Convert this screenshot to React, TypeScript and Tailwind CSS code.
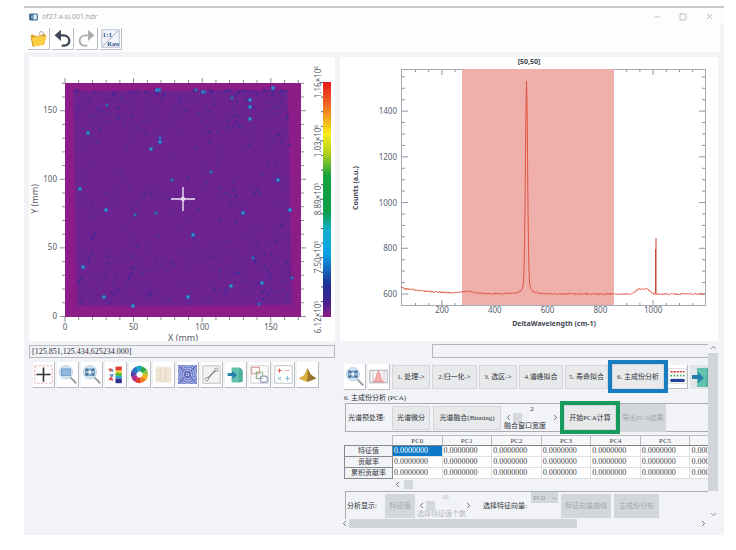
import type { ReactNode } from "react";
import { ChevronDown, ChevronLeft, ChevronRight, ChevronUp, Minus, Square, X } from "lucide-react";

// -----------------------------------------------------------------------------
// Data
// -----------------------------------------------------------------------------
const components = ["PC0", "PC1", "PC2", "PC3", "PC4", "PC5", "PC6"];
const pcaRows = ["特征值", "贡献率", "累积贡献率"];

const brightSpots = [
  [130, 33, 2], [128, 33, 2], [174, 35, 2], [176, 35, 1], [167, 33, 1], [244, 31, 2], [203, 41, 1],
  [221, 43, 2], [221, 50, 2], [221, 62, 2], [78, 48, 1], [59, 76, 2], [131, 81, 1], [131, 85, 2],
  [122, 92, 2], [182, 115, 1], [143, 123, 1], [249, 123, 2], [51, 132, 2], [77, 153, 2],
  [106, 158, 1], [127, 156, 1], [214, 156, 2], [261, 153, 2], [164, 178, 2], [54, 210, 2],
  [75, 240, 2], [104, 249, 2], [159, 240, 2], [202, 229, 2], [233, 226, 2], [263, 221, 1],
  [224, 201, 1], [230, 247, 1]
];

// Small deterministic generator so that the map looks the same on every render
function createRandom(seed: number) {
  let state = seed;
  return () => {
    state = (state * 1664525 + 1013904223) % 4294967296;
    return state / 4294967296;
  };
}

const random = createRandom(27);

const darkSpots = Array.from({ length: 400 }, (_, i) => {
  let x = 46 + random() * 215;
  let y = 34 + random() * 213;
  if (i % 5 === 0) y = 34 + random() * 40;
  if (i % 5 === 1) x = 180 + random() * 81;
  if (i % 5 === 2) y = 195 + random() * 52;
  if (i % 12 === 3) y = 33 + random() * 3;
  return { x, y, opacity: 0.3 + random() * 0.7 };
});

const spectrumPoints = Array.from({ length: 609 }, (_, i) => {
  const x = 61 + i / 2;
  const narrow = Math.exp(-(((x - 186.5) / 1.5) ** 2));
  let y = 237 - 6 * Math.exp(-(x - 61) / 32) + (random() - 0.5) * 1.5;
  y -= 2 * Math.exp(-(((x - 128) / 8) ** 2));
  y -= 183 * narrow + 30 / (1 + ((x - 186.5) / 2) ** 2);
  if (x > 293 && x < 314) y -= Math.min(5, x - 293, (314 - x) * 0.7);
  return `${x},${y.toFixed(1)}`;
}).join(" ");

const colorLabels = [
  { mantissa: "6.12", power: "5", y: 260 },
  { mantissa: "7.50", power: "5", y: 200 },
  { mantissa: "8.89", power: "5", y: 142 },
  { mantissa: "1.03", power: "6", y: 84 },
  { mantissa: "1.16", power: "6", y: 25 }
];

const range = (count: number) => Array.from({ length: count }, (_, i) => i);

// -----------------------------------------------------------------------------
// Charts
// -----------------------------------------------------------------------------
function HeatMap() {
  return (
    <svg viewBox="0 0 306 284" className="block w-full bg-white font-['Noto_Sans',sans-serif] text-[8px]" role="img" aria-label="Raman map">
      <defs>
        <linearGradient id="scale" x1="0" y1="0" x2="0" y2="1">
          <stop offset="0" stopColor="#e8141c" />
          <stop offset="0.1" stopColor="#ee6b1f" />
          <stop offset="0.22" stopColor="#f8ec16" />
          <stop offset="0.3" stopColor="#b5d21c" />
          <stop offset="0.4" stopColor="#12a03c" />
          <stop offset="0.55" stopColor="#0a9c48" />
          <stop offset="0.63" stopColor="#0fb0c8" />
          <stop offset="0.73" stopColor="#08a0e6" />
          <stop offset="0.86" stopColor="#1b2f96" />
          <stop offset="0.93" stopColor="#3c1f8c" />
          <stop offset="1" stopColor="#8b1a87" />
        </linearGradient>
        <pattern id="grain" width="6" height="6" patternUnits="userSpaceOnUse">
          <path d="M0 1h2M3 4h2M5 0v2" stroke="#57208f" strokeWidth="1" opacity="0.2" />
        </pattern>
      </defs>

      <g stroke="#8a8d98" strokeWidth="1">
        {range(18).map((i) => {
          const length = i % 5 === 0 ? 5 : 3;
          const x = 36 + i * 13.72;
          const y = 259.5 - i * 13.72;
          return (
            <g key={i}>
              <path d={`M${x} 260v${length}M${x} 26v-${length}`} />
              <path d={`M36 ${y}h-${length}M272 ${y}h${length}`} />
            </g>
          );
        })}
      </g>

      <rect x="36" y="26" width="236" height="234" fill="#8b1a87" />
      <path d="M44 34L259 33L263 248L48 249Z" fill="#6c218e" />
      <path d="M44 34L259 33L263 248L48 249Z" fill="url(#grain)" />
      {darkSpots.map((spot, i) => (
        <circle key={i} cx={spot.x} cy={spot.y} r="1.2" fill="#3a2799" opacity={spot.opacity} />
      ))}
      {brightSpots.map(([x, y, size], i) => (
        <g key={i}>
          <circle cx={x} cy={y} r={size === 2 ? 2.3 : 1.8} fill="#2b56b0" />
          <circle cx={x} cy={y} r={size === 2 ? 1.4 : 0.7} fill="#3a92cc" />
        </g>
      ))}
      <path d="M142 142h24M154 130v24" stroke="#f1e4f5" strokeWidth="1.4" />
      <circle cx="154" cy="142" r="1.8" fill="none" stroke="#f1e4f5" />

      <g fill="#555a64">
        {[0, 50, 100, 150].map((value) => (
          <g key={value}>
            <text x={36 + value * 1.372} y="273" textAnchor="middle">{value}</text>
            <text x="28" y={262 - value * 1.372} textAnchor="end">{value}</text>
          </g>
        ))}
        <text x="154" y="284" textAnchor="middle" className="text-[9px]">X (mm)</text>
        <text transform="translate(9 142) rotate(-90)" textAnchor="middle" className="text-[9px]">Y (mm)</text>
      </g>

      <rect x="294" y="25" width="8" height="235" fill="url(#scale)" />
      <g stroke="#555a64">
        {range(17).map((i) => <path key={i} d={`M294 ${25.5 + i * 14.6}h${i % 4 === 0 ? -3 : -2}`} />)}
      </g>
      {colorLabels.map((label) => (
        <text key={label.mantissa} transform={`translate(292 ${label.y}) rotate(-90)`} textAnchor="middle" fill="#555a64">
          {label.mantissa}×10<tspan dy="-3" className="text-[5px]">{label.power}</tspan>
        </text>
      ))}
    </svg>
  );
}

function SpectrumChart() {
  return (
    <svg viewBox="0 0 378 284" className="block w-full overflow-visible bg-white font-['Noto_Sans',sans-serif] text-[8px]" role="img" aria-label="Spectrum">
      <rect x="122" y="12" width="152" height="236" fill="#efb0ac" />
      <rect x="61.5" y="12.5" width="304" height="236" fill="none" stroke="#a3a8b4" />
      <g stroke="#8f94a0">
        {range(22).map((i) => {
          const x = 75.5 + i * 13.2;
          const length = i % 4 === 2 ? 5 : 2;
          return <path key={i} d={`M${x} 248v-${length}M${x} 13v${length}`} />;
        })}
        {range(20).map((i) => {
          const y = 237 - i * 11.43;
          const length = i % 4 === 0 ? 6 : 3;
          return <path key={i} d={`M62 ${y}h${length}M365 ${y}h-${length}`} />;
        })}
      </g>
      <rect x="122" y="12" width="152" height="236" fill="#efb0ac" />
      <polyline points={spectrumPoints} fill="none" stroke="#e0513f" strokeWidth="1" />
      <path d="M315.5 236V192M316 236V181" fill="none" stroke="#c84232" />
      <g fill="#555d6e">
        {[600, 800, 1000, 1200, 1400].map((value) => (
          <text key={value} x="57" y={240 - (value - 600) * 0.2285} textAnchor="end">{value}</text>
        ))}
        {[200, 400, 600, 800, 1000].map((value) => (
          <text key={value} x={102 + (value - 200) * 0.264} y="256" textAnchor="middle">{value}</text>
        ))}
      </g>
      <g fill="#3c4250" fontWeight="700" className="font-['Noto_Sans',sans-serif] text-[7px]">
        <text x="189" y="7" textAnchor="middle">[50,50]</text>
        <text x="214" y="269" textAnchor="middle">DeltaWavelength (cm-1)</text>
        <text transform="translate(18 131) rotate(-90)" textAnchor="middle">Counts (a.u.)</text>
      </g>
    </svg>
  );
}

// -----------------------------------------------------------------------------
// Icons
// -----------------------------------------------------------------------------
function Icon({ children }: { children: ReactNode }) {
  return <svg viewBox="0 0 24 24" className="block size-full" fill="none" aria-hidden="true">{children}</svg>;
}

const FolderIcon = () => (
  <Icon>
    <path d="M2 8l3-1 4 2 11-3 2 3-3 11-14 2z" fill="#e0a22c" />
    <path d="M3 11l16-3 3 2-4 10-13 2z" fill="#fbcf3f" />
    <path d="M13 7c0-5 5-5 5-1v4" stroke="#8b8b84" />
    <path d="M3 11l2 11" stroke="#c98a25" />
  </Icon>
);

const UndoIcon = ({ color }: { color: string }) => (
  <Icon>
    <path d="M7 8h6c10 0 10 13 1 13h-3" stroke={color} strokeWidth="2.8" />
    <path d="M2 8l8-7v14z" fill={color} />
  </Icon>
);

const RedoIcon = ({ color }: { color: string }) => (
  <Icon>
    <path d="M17 8h-6c-10 0-10 13-1 13h3" stroke={color} strokeWidth="2.4" />
    <path d="M22 8l-8-7v14z" fill={color} />
  </Icon>
);

const RawIcon = () => (
  <Icon>
    <rect x="1" y="1" width="22" height="22" fill="#f1f4f9" stroke="#a9b4c8" />
    <path d="M2 22L22 2" stroke="#8e9bb4" />
    <text x="2" y="10" fontSize="9" fontWeight="700" fill="#31528e">1:1</text>
    <text x="8" y="22" fontSize="8" fontWeight="700" fill="#31528e">Raw</text>
  </Icon>
);

const CrosshairIcon = () => (
  <Icon>
    <rect x="1" y="1" width="22" height="22" stroke="#e89a97" strokeDasharray="3 2" />
    <path d="M12 3v18M3 12h18" stroke="#2c2f33" strokeWidth="2" />
  </Icon>
);

const MagnifierIcon = ({ fit }: { fit?: boolean }) => (
  <Icon>
    <path d="M15 15l8 8" stroke="#9a9fa4" strokeWidth="2.4" />
    <circle cx="10" cy="9" r="8.5" fill="#cfe4f3" stroke="#b9d0e0" />
    <rect x="4.500" y="5" width="11" height="8" fill="#8fbbdf" stroke="#5c89b3" />
    {fit && <path d="M5 5l4 3M15 5l-4 3M5 13l4-3M15 13l-4-3" stroke="#2e4c6c" strokeWidth="1.4" />}
    {fit && <rect x="8" y="7" width="4" height="4" fill="#e6f1fa" />}
  </Icon>
);

const PaletteIcon = () => (
  <Icon>
    <path d="M3 4l6 1-4 4zM3 19l7 1-4-6z" fill="#d8574d" />
    <path d="M4 12l6-1-2 5zM7 4l3 4-3 1z" fill="#5f92c8" />
    <path d="M12 2h8v5h-8z" fill="#e4372a" />
    <path d="M12 7h8v3h-8z" fill="#f6c91d" />
    <path d="M12 10h8v4h-8z" fill="#58b947" />
    <path d="M12 14h8v3h-8z" fill="#20a4ca" />
    <path d="M12 17h8v6h-8z" fill="#2b2f88" />
  </Icon>
);

const wheelColors = ["#f4b51e", "#f07d22", "#e5352b", "#b02a86", "#5640a0", "#2472c8", "#1ba3c9", "#27a64a", "#8cc63e"];

const WheelIcon = () => (
  <Icon>
    {wheelColors.map((color, i) => (
      <circle key={color} cx="12" cy="12" r="7.4" stroke={color} strokeWidth="7" pathLength="9" strokeDasharray="1.05 7.95" strokeDashoffset={-i} />
    ))}
  </Icon>
);

const TextureIcon = () => (
  <Icon>
    <rect x="2" y="2" width="20" height="20" fill="#f3e9da" />
    <path d="M2 8q3-5 6 0t6 0t7 0M2 14q3-5 6 0t6 0t7 0M2 19q3-4 6 0t6 0t7 0M8 3v18M15 3v18" stroke="#e3d4be" />
  </Icon>
);

const WaveIcon = () => (
  <Icon>
    <rect x="0" y="0" width="24" height="24" fill="#7584cf" />
    {[2, 5, 8, 11, 14].map((r) => <circle key={r} cx="12" cy="12" r={r} stroke="#eef0fb" strokeDasharray="2 1" />)}
    <circle cx="12" cy="12" r="3.5" stroke="#27398f" />
    <path d="M2 2l6 6M22 2l-6 6M2 22l6-6M22 22l-6-6" stroke="#2c3e9b" strokeDasharray="2 1" />
  </Icon>
);

const LineIcon = () => (
  <Icon>
    <rect x="1" y="1" width="22" height="22" fill="#f2f2f2" stroke="#b5b5b8" />
    <path d="M6 18L18 6" stroke="#777b80" strokeWidth="1.5" />
    <circle cx="6" cy="18" r="2" fill="#fff" stroke="#777b80" />
    <circle cx="18" cy="6" r="2" fill="#fff" stroke="#777b80" />
  </Icon>
);

const ExportIcon = () => (
  <Icon>
    <path d="M7 3h10l4 4v14l-5 1H7z" fill="#62c3ae" />
    <path d="M17 3l4 4h-4z" fill="#3c9c88" />
    <path d="M16 8h5v13l-5 1z" fill="#4fb09c" />
    <path d="M2 10h6V7l6 6-6 5v-4H2z" fill="#247fae" />
  </Icon>
);

const LayersIcon = () => (
  <Icon>
    <rect x="1" y="1" width="22" height="22" fill="#fafafa" stroke="#c7c7c7" />
    <rect x="2" y="3" width="10" height="8" stroke="#dda09c" strokeWidth="1.4" />
    <path d="M8 8v9h8" stroke="#85ad78" strokeWidth="1.4" />
    <path d="M8 9h8v5" stroke="#85ad78" strokeWidth="1.2" />
    <rect x="13" y="14" width="9" height="8" rx="3" stroke="#8f9ebb" strokeWidth="1.4" />
  </Icon>
);

const MarksIcon = () => (
  <Icon>
    <rect x="1" y="1" width="22" height="22" fill="#fff" stroke="#b5b5b8" />
    <path d="M4 7h6M7 4v6" stroke="#df655c" strokeWidth="1.3" />
    <path d="M14 7h6" stroke="#df655c" strokeDasharray="2 1" />
    <path d="M5 15l4 4M9 15l-4 4M17 14v6M14 17h6" stroke="#75b7d8" strokeWidth="1.2" />
  </Icon>
);

const SurfaceIcon = () => (
  <Icon>
    <path d="M1 17l7-4 4-9 4 8 7 5-11 4z" fill="#c4932a" />
    <path d="M12 4l-1 17-10-4 7-4z" fill="#dcb03c" />
    <path d="M12 4l4 8 7 5-11 4 1-8z" fill="#96732a" />
  </Icon>
);

const PeakIcon = () => (
  <Icon>
    <rect x="1" y="4" width="22" height="16" fill="#f3f5f7" stroke="#8fa0ac" />
    <path d="M5 19c4 0 5-14 7-14s3 14 7 14z" fill="#f3b1ab" stroke="#e0867f" />
    <path d="M5 4v16M19 4v16" stroke="#e3b3b3" />
  </Icon>
);

const LegendIcon = () => (
  <Icon>
    <rect x="1" y="2" width="22" height="19" fill="#fff" stroke="#d7d7d7" />
    <path d="M3 6h18" stroke="#d64439" strokeWidth="1.6" strokeDasharray="3 1" />
    <path d="M3 11h18" stroke="#3fa95c" strokeWidth="2.2" strokeDasharray="2 2" />
    <path d="M3 17h18" stroke="#24409b" strokeWidth="4" />
  </Icon>
);

// -----------------------------------------------------------------------------
// Controls
// -----------------------------------------------------------------------------
function IconButton({ label, children }: { label: string; children: ReactNode }) {
  return (
    <button type="button" aria-label={label} className="size-[22px] shrink-0 border-r border-b border-[#b9bcc0] bg-white p-px">
      {children}
    </button>
  );
}

function SmallIconButton({ label, children }: { label: string; children: ReactNode }) {
  return (
    <button type="button" aria-label={label} className="h-[26px] w-[22px] shrink-0 border-r border-b border-[#b9bcc0] bg-white px-px py-[2px]">
      {children}
    </button>
  );
}

function TextButton({ className = "", disabled, children }: { className?: string; disabled?: boolean; children: ReactNode }) {
  return (
    <button
      type="button"
      disabled={disabled}
      className={`h-6 shrink-0 border border-[#d3d6d9] bg-[#e7e9eb] text-center whitespace-nowrap text-[#2e3136] disabled:border-transparent disabled:bg-[#d4d7da] disabled:text-[#a2a6aa] ${className}`}
    >
      {children}
    </button>
  );
}

function Stepper({ value, caption, disabled }: { value: string; caption: string; disabled?: boolean }) {
  return (
    <div className={`flex w-14 shrink-0 flex-col leading-[8px] ${disabled ? "text-[#b4b8bc]" : "text-[#2e3136]"}`}>
      <output className="text-center">{value}</output>
      <div className="flex items-center text-[#3d4045]">
        <button type="button" aria-label={`${caption} -`}><ChevronLeft className="size-[9px]" /></button>
        <span className="h-[9px] w-[9px] bg-[#d6d9dc]" />
        <button type="button" aria-label={`${caption} +`} className="ml-auto"><ChevronRight className="size-[9px]" /></button>
      </div>
      <span className="whitespace-nowrap">{caption}</span>
    </div>
  );
}

function PcaTable() {
  return (
    <table className="w-[396px] table-fixed border-collapse text-[8px] leading-[10px] text-[#3d4045]">
      <thead>
        <tr className="h-[10px]">
          <th className="w-[48px]" />
          {components.map((name) => (
            <th key={name} scope="col" className="border border-[#b8bbbf] border-b-[#7f8287] bg-[#f6f7f8] p-0 text-[7px] leading-[8px] font-normal">{name}</th>
          ))}
        </tr>
      </thead>
      <tbody>
        {pcaRows.map((row, rowIndex) => (
          <tr key={row} className="h-[11px]">
            <th scope="row" className="border border-[#85888d] p-0 text-[7px] leading-[9px] font-normal">{row}</th>
            {components.map((name, i) => (
              <td
                key={name}
                className={`border border-[#dddfe2] p-0 pl-px ${rowIndex === 0 && i === 0 ? "bg-[#0a79c8] text-white" : "bg-white"}`}
              >
                0.0000000
              </td>
            ))}
          </tr>
        ))}
      </tbody>
    </table>
  );
}

function AnalysisPanel() {
  return (
    <section className="min-w-0 flex-1 overflow-hidden">
      <div className="mt-[3px] ml-[92px] h-[14px] border border-r-0 border-[#b4b7bb]" />

      {/* Processing steps */}
      <div className="mt-[2px] flex h-[33px] items-center gap-[2px] pl-1">
        <SmallIconButton label="缩放"><MagnifierIcon fit /></SmallIconButton>
        <SmallIconButton label="选峰"><PeakIcon /></SmallIconButton>
        <TextButton className="w-[38px]">1. 处理-&gt;</TextButton>
        <TextButton className="w-[45px]">2.归一化-&gt;</TextButton>
        <TextButton className="w-[38px]">3. 选区-&gt;</TextButton>
        <TextButton className="w-[44px]">4.谱峰拟合</TextButton>
        <TextButton className="w-[43px]">5. 寿命拟合</TextButton>
        <div className="-ml-[2px] h-[33px] shrink-0 border-4 border-[#157cc1]">
          <TextButton className="h-full w-[52px]">6. 主成份分析</TextButton>
        </div>
        <button type="button" aria-label="图例" className="-ml-[2px] h-6 w-5 shrink-0 border-r border-b border-[#b9bcc0] bg-white"><LegendIcon /></button>
        <button type="button" aria-label="导出" className="h-6 w-6 shrink-0 bg-[#e2e5e8]"><ExportIcon /></button>
      </div>

      <h2 className="pl-1 leading-[10px]">6. 主成份分析 (PCA)</h2>

      {/* Preprocessing */}
      <div className="ml-[5px] flex h-[29px] items-center border border-r-0 border-[#a9acb0] pl-[2px]">
        <span className="w-11 shrink-0">光谱预处理:</span>
        <TextButton className="w-[38px]">光谱微分</TextButton>
        <TextButton className="mx-[3px] w-[68px]">光谱融合(Binning)</TextButton>
        <Stepper value="2" caption="融合窗口宽度" />
        <div className="relative h-[33px] shrink-0 border-4 border-[#149a5c]">
          <TextButton className="h-full w-[52px]">开始PCA计算</TextButton>
        </div>
        <TextButton className="h-[28px] w-[46px]" disabled>导出PCA结果</TextButton>
      </div>

      <div className="mt-[3px] pl-1"><PcaTable /></div>

      <div className="flex h-[11px] items-center pl-[53px] text-[#3d4045]">
        <ChevronLeft className="size-[9px]" />
        <span className="ml-[2px] size-[9px] bg-[#d6d9dc]" />
      </div>

      {/* Result display */}
      <div className="mt-[1px] ml-[5px] flex h-7 items-center border border-r-0 border-b-0 border-[#a9acb0] pl-px">
        <span className="w-[38px] shrink-0">分析显示:</span>
        <TextButton className="mr-[2px] w-[30px]" disabled>特征值</TextButton>
        <Stepper value="10" caption="选择特征值个数" disabled />
        <label htmlFor="vector" className="ml-[10px] w-[48px] shrink-0">选择特征向量:</label>
        <div className="flex shrink-0 items-center self-start bg-[#d4d7da] pt-px text-[#8d9195]">
          <select id="vector" disabled className="h-[10px] w-5 appearance-none pl-[2px] leading-[10px]">
            <option>PC0</option>
          </select>
          <ChevronDown className="size-[7px]" />
        </div>
        <TextButton className="mx-[3px] w-[50px]" disabled>特征向量曲线</TextButton>
        <TextButton className="w-[45px]" disabled>主成份分布</TextButton>
      </div>
    </section>
  );
}

// -----------------------------------------------------------------------------
// Main window
// -----------------------------------------------------------------------------
export default function App() {
  return (
    <div className="min-h-screen bg-white pt-[6px] pr-3 pb-4 pl-6 font-['Liberation_Serif','Noto_Sans_CJK_SC',serif] text-[7px] leading-[10px] text-[#2e3136]">
      <div className="border-t-2 border-[#c9caca] bg-[#f1f3f6] opacity-99">
        {/* Title bar */}
        <header className="flex h-[17px] items-center bg-[#fdfdfd] pr-[10px] pl-[5px] font-['Noto_Sans',sans-serif] text-[#a0a3a7]">
          <svg viewBox="0 0 12 10" className="mr-1 h-[8px] w-[9px]" aria-hidden="true">
            <rect x="1" y="1" width="10" height="8" rx="1" fill="#e3eef7" stroke="#3b6892" strokeWidth="1.5" />
            <path d="M1 1h5v8H1z" fill="#3b6892" />
            <path d="M4 3v4" stroke="#fff" />
          </svg>
          <h1>of27-x-si.001.hdr</h1>
          <div className="ml-auto flex gap-[18px]">
            <button type="button" aria-label="Minimize"><Minus className="size-2" /></button>
            <button type="button" aria-label="Maximize"><Square className="size-2" /></button>
            <button type="button" aria-label="Close"><X className="size-[9px]" /></button>
          </div>
        </header>

        <div className="mr-1 flex h-[27px] items-center gap-[2px] bg-[#fcfdfd] pl-1">
          <IconButton label="Open"><FolderIcon /></IconButton>
          <IconButton label="Undo"><UndoIcon color="#3c4358" /></IconButton>
          <IconButton label="Redo"><RedoIcon color="#a9acb0" /></IconButton>
          <IconButton label="Raw"><RawIcon /></IconButton>
        </div>

        <main className="grid grid-cols-[306fr_378fr] gap-x-[5px] pt-[5px] pr-[6px] pb-[7px] pl-[5px]">
          <HeatMap />
          <SpectrumChart />

          {/* Map tools */}
          <section className="min-w-0">
            <output className="mt-1 block h-[13px] border border-[#b4b7bb] pl-[2px] text-[8px] leading-[11px]">
              [125.851,125.434,625234.000]
            </output>
            <div className="mt-1 flex gap-[2px] pl-1">
              <SmallIconButton label="Crosshair"><CrosshairIcon /></SmallIconButton>
              <SmallIconButton label="Zoom"><MagnifierIcon /></SmallIconButton>
              <SmallIconButton label="Fit"><MagnifierIcon fit /></SmallIconButton>
              <SmallIconButton label="Colour scale"><PaletteIcon /></SmallIconButton>
              <SmallIconButton label="Colour wheel"><WheelIcon /></SmallIconButton>
              <SmallIconButton label="Texture"><TextureIcon /></SmallIconButton>
              <SmallIconButton label="Filter"><WaveIcon /></SmallIconButton>
              <SmallIconButton label="Line"><LineIcon /></SmallIconButton>
              <SmallIconButton label="Export"><ExportIcon /></SmallIconButton>
              <SmallIconButton label="Regions"><LayersIcon /></SmallIconButton>
              <SmallIconButton label="Markers"><MarksIcon /></SmallIconButton>
              <SmallIconButton label="Surface"><SurfaceIcon /></SmallIconButton>
            </div>
          </section>

          {/* Analysis area with its scroll bars */}
          <div className="min-w-0">
            <div className="flex">
              <AnalysisPanel />
              <div className="flex w-[10px] flex-col items-center pt-[2px] text-[#5d6065]">
                <ChevronUp className="size-[9px]" />
                <span className="mt-px h-[138px] w-full bg-[#d1d4d9]" />
                <ChevronDown className="mt-auto size-[9px]" />
              </div>
            </div>
            <div className="flex h-[9px] items-center pr-[10px] text-[#3d4045]">
              <ChevronLeft className="size-[9px]" />
              <span className="h-full w-[62%] bg-[#d1d4d9]" />
              <ChevronRight className="ml-auto size-[9px]" />
            </div>
          </div>
        </main>
      </div>
    </div>
  );
}
